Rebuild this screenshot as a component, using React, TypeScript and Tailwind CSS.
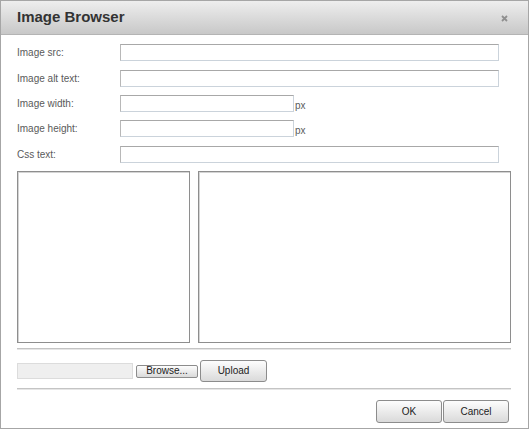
import React from 'react';

const font = "font-['Liberation_Sans',Arial,sans-serif]";

function Field({ label, short, className }: { label: string; short?: boolean; className?: string }) {
  return (
    <div className={`flex items-center h-[17px] ${className ?? ''}`}>
      <label className="w-[103px] text-[10px] text-[#5a5a5a]">{label}</label>
      <input
        className={`h-[17px] ${short ? 'w-[174px]' : 'w-[379px]'} border border-[#cbd3db] border-t-[#a8a8a8] border-l-[#b8b8b8] bg-white outline-none`}
      />
      {short && <span className="ml-[1px] text-[10px] text-[#5a5a5a] mt-[3px]">px</span>}
    </div>
  );
}

function Btn({ children, className }: { children: React.ReactNode; className?: string }) {
  return (
    <button
      className={`flex items-center justify-center border border-[#8c8c8c] bg-gradient-to-b from-[#fdfdfd] to-[#dadada] text-[10px] leading-[10px] text-[#222] ${className ?? ''}`}
    >
      {children}
    </button>
  );
}

export default function App() {
  return (
    <div className={`${font} w-[529px] h-[429px] border border-[#a6a6a6] bg-white flex flex-col`}>
      {/* title bar */}
      <div className="h-[34px] shrink-0 flex items-center justify-between pl-[16px] pr-[20px] bg-gradient-to-b from-[#eeeeee] to-[#c8c8c8] border-b border-[#b4b4b4]">
        <h1 className="text-[15px] font-bold text-[#333]">Image Browser</h1>
        <svg width="7" height="7" viewBox="0 0 7 7" className="mt-[1px]">
          <path d="M1 1L6 6M6 1L1 6" stroke="#8f8f8f" strokeWidth="1.8" />
        </svg>
      </div>

      <div className="px-[16px] pt-[9px] flex flex-col">
        <Field label="Image src:" />
        <Field label="Image alt text:" className="mt-[9px]" />
        <Field label="Image width:" short className="mt-[8px]" />
        <Field label="Image height:" short className="mt-[8px]" />
        <Field label="Css text:" className="mt-[9px]" />

        <div className="mt-[8px] flex gap-[8px]">
          <div className="w-[173px] h-[172px] border border-[#8e8e8e] shadow-[inset_1px_1px_0_#d4d4d4]" />
          <div className="w-[313px] h-[172px] border border-[#8e8e8e] shadow-[inset_1px_1px_0_#d4d4d4]" />
        </div>

        <div className="mt-[5px] w-[494px] h-[2px] border-t border-[#c4c4c4] border-b border-b-[#e6e6e6]" />

        <div className="mt-[10px] flex items-center h-[22px]">
          <div className="w-[116px] h-[16px] bg-[#efefef] border border-[#dcdcdc]" />
          <Btn className="ml-[3px] w-[62px] h-[13px] rounded-[2px] border-[#6f6f6f]">Browse...</Btn>
          <Btn className="ml-[2px] w-[67px] h-[22px] rounded-[3px]">Upload</Btn>
        </div>

        <div className="mt-[6px] w-[494px] h-[2px] border-t border-[#c4c4c4] border-b border-b-[#e6e6e6]" />

        <div className="mt-[10px] w-[494px] flex justify-end gap-[1px] pr-[2px]">
          <Btn className="w-[66px] h-[23px] rounded-[3px]">OK</Btn>
          <Btn className="w-[66px] h-[23px] rounded-[3px]">Cancel</Btn>
        </div>
      </div>
    </div>
  );
}
